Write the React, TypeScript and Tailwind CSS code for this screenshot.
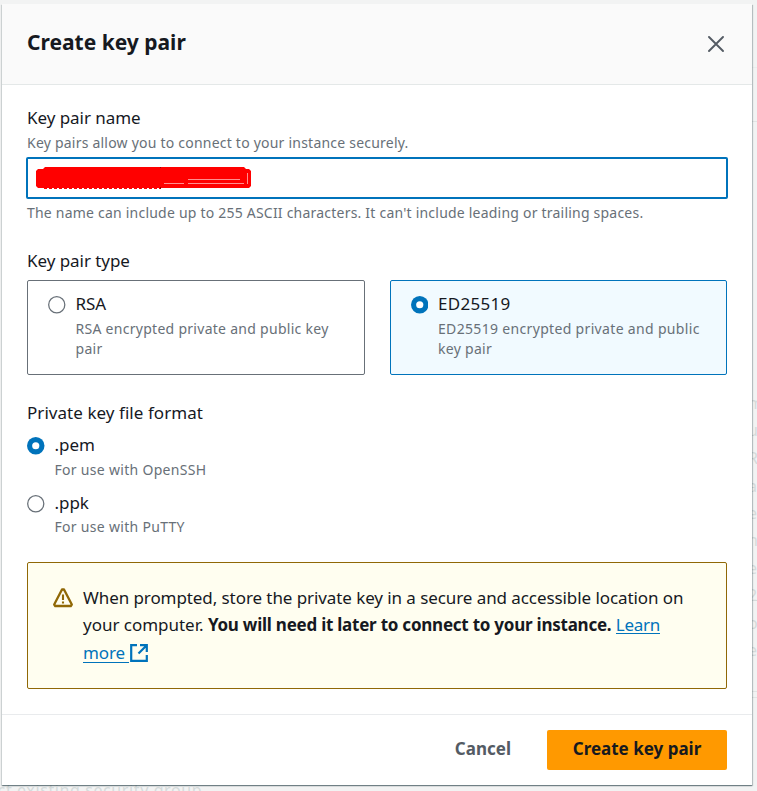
import React from "react";

const label = "h-7 whitespace-nowrap text-[17px] leading-7 tracking-[-0.05px] text-[#16191f]";
const hint = "h-5 whitespace-nowrap text-[14px] leading-5 text-[#687078]";

function Radio({ checked }: { checked?: boolean }) {
  return (
    <svg width="17.5" height="17.5" viewBox="0 0 18 18" className="block shrink-0">
      {checked ? (
        <>
          <circle cx="9" cy="9" r="9" fill="#0073bb" />
          <circle cx="9" cy="9" r="3.7" fill="#fff" />
        </>
      ) : (
        <circle cx="9" cy="9" r="8.3" fill="#fff" stroke="#687078" strokeWidth="1.3" />
      )}
    </svg>
  );
}

function SideText({ items }: { items: [string, string][] }) {
  return (
    <>
      {items.map(([t, top], i) => (
        <span key={i} className={"absolute left-[748px] text-[16px] leading-5 text-[#d5dbdb] " + top}>
          {t}
        </span>
      ))}
    </>
  );
}

export default function App() {
  return (
    <div className="relative h-[791px] w-[757px] overflow-hidden bg-[#f2f3f3] pl-[2px] pt-[4px] font-['Noto_Sans',sans-serif]">
      <SideText
        items={[
          ["m", "top-[393px]"],
          ["u", "top-[420px]"],
          ["Re", "top-[448px]"],
          ["a", "top-[476px]"],
          ["er", "top-[503px]"],
          ["n", "top-[530px]"],
          ["e", "top-[558px]"],
          ["2", "top-[585px]"],
          ["o", "top-[613px]"],
          ["e", "top-[640px]"],
        ]}
      />
      <div className="absolute left-[752px] top-[67px] h-px w-[5px] bg-[#eaeded]" />
      <div className="absolute left-[752px] top-[121px] h-px w-[5px] bg-[#e1e4e4]" />
      <div className="absolute left-[752px] top-[600px] h-px w-[5px] bg-[#d5dbdb]" />
      <div className="absolute left-[752px] top-[691px] h-px w-[5px] bg-[#e1e4e4]" />
      <div className="absolute left-[752px] top-[697px] h-px w-[5px] bg-[#e1e4e4]" />
      <span className="absolute -left-[12px] top-[780px] whitespace-nowrap text-[16px] leading-5 tracking-[0.6px] text-[#d5dbdb]">
        ect existing security group
      </span>
      <div className="relative flex h-[781px] w-[750px] flex-col bg-white shadow-[0_1px_1px_0_rgba(0,28,36,0.35),1px_1px_1px_0_rgba(0,28,36,0.2),-1px_1px_1px_0_rgba(0,28,36,0.1)]">
        <header className="flex h-[81px] items-center justify-between border-b border-[#e4e8e8] bg-[#fafafa] pl-[25px] pr-[28px]">
          <h2 className="mb-[4px] text-[21px] font-bold leading-7 text-[#16191f]">Create key pair</h2>
          <svg width="16" height="16" viewBox="0 0 16 16" fill="none" stroke="#545b64" strokeWidth="1.9" strokeLinecap="round">
            <path d="M1 1 15 15M15 1 1 15" />
          </svg>
        </header>

        <main className="flex h-[629px] flex-col px-[25px] pt-[19px]">
          <div className={label}>Key pair name</div>
          <div className={hint + " mt-px tracking-[0.22px]"}>Key pairs allow you to connect to your instance securely.</div>
          <div className="-ml-px mt-[4px] flex h-[42px] w-[702px] items-center rounded-[2px] border-2 border-[#0073bb] bg-white pl-[8px]">
            <svg width="216" height="22" viewBox="0 0 216 22" className="block">
              <path d="M9 0H208L210 2H213L215 4V19L213 21H2L0 19V4L2 2H7Z" fill="#f00" />
              <path d="M152 12.5H204M128 16.5H148M152 16.5H208M211.5 6V17" stroke="#ff8f8f" fill="none" />
              <path d="M8 21.5H125" stroke="#f00" strokeDasharray="3 2" />
              <path d="M124.5 0V1M124.5 20V22" stroke="#900" />
            </svg>
          </div>
          <div className={hint + " mt-[4px] tracking-[0.215px]"}>The name can include up to 255 ASCII characters. It can't include leading or trailing spaces.</div>

          <div className={label + " mt-[24px]"}>Key pair type</div>
          <div className="mt-[5px] flex gap-[25px]">
            <div className="flex h-[95px] w-[338px] gap-[10px] rounded-[2px] border border-[#687078] pl-[20px] pt-[9px]">
              <div className="pt-[6px]"><Radio /></div>
              <div>
                <div className={label}>RSA</div>
                <div className={hint + " mt-px tracking-[0.28px]"}>RSA encrypted private and public key</div>
                <div className={hint + " tracking-[0.28px]"}>pair</div>
              </div>
            </div>
            <div className="flex h-[95px] w-[337px] gap-[10px] rounded-[2px] border border-[#0073bb] bg-[#f1faff] pl-[19.5px] pt-[9px]">
              <div className="pt-[6px]"><Radio checked /></div>
              <div>
                <div className={label + " tracking-[0.3px]"}>ED25519</div>
                <div className={hint + " mt-px tracking-[0.33px]"}>ED25519 encrypted private and public</div>
                <div className={hint + " tracking-[0.28px]"}>key pair</div>
              </div>
            </div>
          </div>

          <div className={label + " mt-[24px] tracking-[0.05px]"}>Private key file format</div>
          <div className="mt-[4px] flex gap-[10px]">
            <div className="pt-[6px]"><Radio checked /></div>
            <div>
              <div className={label}>.pem</div>
              <div className={hint + " mt-px tracking-[0.3px]"}>For use with OpenSSH</div>
            </div>
          </div>
          <div className="mt-[9px] flex gap-[10px]">
            <div className="pt-[6px]"><Radio /></div>
            <div>
              <div className={label}>.ppk</div>
              <div className={hint + " tracking-[0.3px]"}>For use with PuTTY</div>
            </div>
          </div>

          <div className="mt-[25px] flex h-[127px] w-[700px] gap-[10px] rounded-[2px] border border-[#906806] bg-[#fffef0] pl-[25px] pt-[21px] text-[17px] text-[#16191f]">
            <svg width="20" height="20" viewBox="0 0 20 20" fill="none" stroke="#906806" strokeWidth="2.3" strokeLinejoin="round" className="mt-[4px] block shrink-0">
              <path d="M9 1.5h2L18.8 16.5 17.8 18H2.2L1.2 16.5Z" />
              <path d="M10 6.5V12M10 13.5V15.5" strokeWidth="2.1" />
            </svg>
            <div className="whitespace-nowrap">
              <div className="h-[27px] leading-[27px] tracking-[-0.08px]">When prompted, store the private key in a secure and accessible location on</div>
              <div className="h-7 leading-[27px]">
                <span className="tracking-[-0.02px]">your computer. </span>
                <b className="tracking-[-0.24px]">You will need it later to connect to your instance.</b>{" "}
                <a className="inline-block h-[23px] border-b border-[#0073bb] align-top tracking-[-0.3px] text-[#0073bb]">Learn</a>
              </div>
              <div className="flex leading-7 text-[#0073bb]">
                <a className="h-[24px] w-[46px] border-b border-[#0073bb] tracking-[-0.1px]">more</a>
                <svg width="18" height="18" viewBox="0 0 18 18" fill="none" stroke="#0073bb" strokeWidth="2.2" className="ml-px mt-[5px] block">
                  <path d="M7 1.2H1.2V16.8H16.8V11M10 1.2H16.8V8M16.5 1.5 8.5 9.5" />
                </svg>
              </div>
            </div>
          </div>
        </main>

        <footer className="flex h-[71px] items-start justify-end border-t border-[#e9ebed] pr-[25px] pt-[15px] text-[17px] font-bold leading-[38px]">
          <button className="mr-[36px] text-[#545b64]">Cancel</button>
          <button className="flex h-[40px] w-[180px] justify-center rounded-[2px] bg-[#ff9900] text-[#16191f]">Create key pair</button>
        </footer>
      </div>
    </div>
  );
}
